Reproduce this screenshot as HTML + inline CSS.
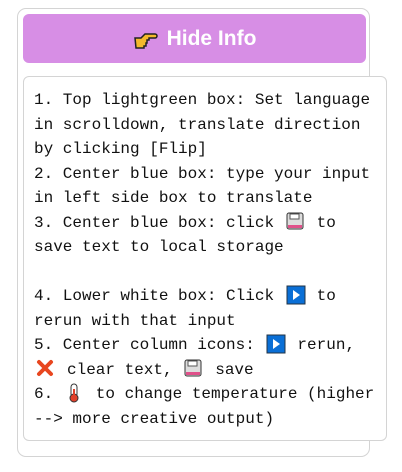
<!DOCTYPE html>
<html><head><meta charset="utf-8"><style>
body{margin:0;background:#fff;width:402px;height:472px;position:relative;overflow:hidden}
.outer{position:absolute;left:17px;top:8px;width:353px;height:449px;border:1px solid #d4d4d4;border-radius:9px;box-sizing:border-box}
.btn{position:absolute;left:23px;top:14px;width:343px;height:49px;background:#d78ee5;border-radius:6px;color:#fff;font:bold 21px "Liberation Sans",sans-serif;display:flex;align-items:center;justify-content:center}
.inner{position:absolute;left:23px;top:76px;width:364px;height:365px;border:1px solid #d4d4d4;border-radius:6px;background:#fff;box-sizing:border-box}
pre{margin:0;position:absolute;left:34px;top:88px;font:16px/24.5px "Liberation Mono",monospace;color:#111}
.ic{display:inline-block;width:23.4px;height:18px;vertical-align:-3px;position:relative}
.ic svg{position:absolute;left:2px;top:0}
</style></head><body>
<div class="outer"></div>
<div class="btn"><svg width="26" height="22" viewBox="0 0 26 22" style="margin-right:8px"><path d="M2 10h6l4-4h10a2 2 0 0 1 0 4h-6v2h-2v3h-1v3h-2v2H3z" fill="#f4b92b" stroke="#222" stroke-width="1.5"/></svg>Hide Info</div>
<div class="inner"></div>
<pre>1. Top lightgreen box: Set language
in scrolldown, translate direction
by clicking [Flip]
2. Center blue box: type your input
in left side box to translate
3. Center blue box: click <span class="ic"><svg width="18" height="18"><rect x="1" y="1" width="16" height="16" rx="2" fill="#ddd" stroke="#333"/><rect x="4" y="2" width="9" height="5" fill="#fff" stroke="#555"/><rect x="2" y="13" width="14" height="3" fill="#e0508a"/></svg></span> to
save text to local storage

4. Lower white box: Click <span class="ic"><svg width="20" height="20"><rect x="1" y="1" width="18" height="18" fill="#0a6fd6" stroke="#234"/><path d="M7 5l7 5-7 5z" fill="#fff"/></svg></span> to
rerun with that input
5. Center column icons: <span class="ic"><svg width="20" height="20"><rect x="1" y="1" width="18" height="18" fill="#0a6fd6" stroke="#234"/><path d="M7 5l7 5-7 5z" fill="#fff"/></svg></span> rerun,
<span class="ic"><svg width="18" height="18"><path d="M3 3l12 12M15 3L3 15" stroke="#e8461f" stroke-width="4" stroke-linecap="round"/></svg></span> clear text, <span class="ic"><svg width="18" height="18"><rect x="1" y="1" width="16" height="16" rx="2" fill="#ddd" stroke="#333"/><rect x="4" y="2" width="9" height="5" fill="#fff" stroke="#555"/><rect x="2" y="13" width="14" height="3" fill="#e0508a"/></svg></span> save
6. <span class="ic"><svg width="18" height="20"><rect x="6" y="1" width="6" height="13" rx="3" fill="#fff" stroke="#333"/><circle cx="9" cy="15" r="4" fill="#e0402a" stroke="#333"/><rect x="8" y="6" width="2" height="8" fill="#e0402a"/></svg></span> to change temperature (higher
--&gt; more creative output)</pre>
</body></html>
